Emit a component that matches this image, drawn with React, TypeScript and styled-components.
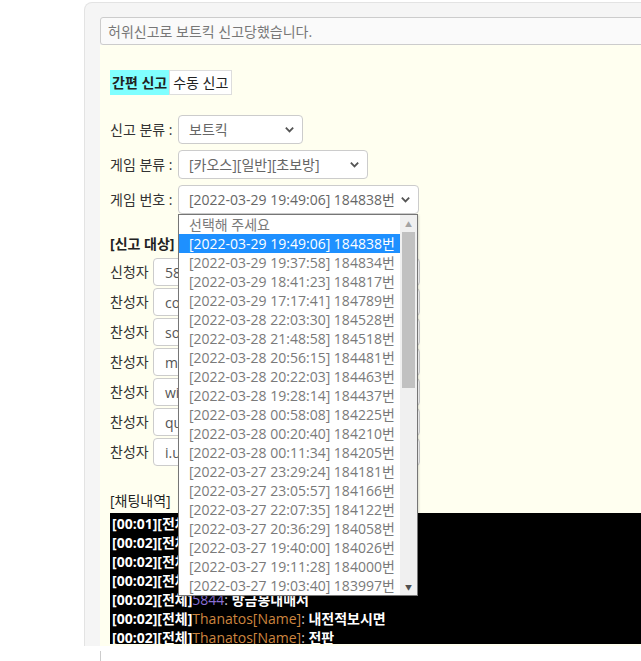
import React from "react";
import styled, { createGlobalStyle } from "styled-components";

const GlobalStyle = createGlobalStyle`
  html, body {
    margin: 0;
    padding: 0;
    background: #ffffff;
    overflow: hidden;
  }
  body {
    font-family: "Open Sans", "Noto Sans CJK KR", sans-serif;
    font-size: 14px;
    color: #333;
  }
`;

const Page = styled.div`
  width: 641px;
  height: 661px;
  box-sizing: border-box;
  padding: 2px 0 0 84px;
  overflow: hidden;
`;

const Well = styled.div`
  width: 660px;
  background: #f5f5f5;
  border: 1px solid #e3e3e3;
  border-bottom: none;
  border-radius: 8px 8px 0 0;
  padding: 14px 0 0 15px;
`;

const ReasonInput = styled.input`
  display: block;
  box-sizing: border-box;
  width: 640px;
  height: 28px;
  margin: 0;
  padding: 0 7px;
  border: 1px solid #cccccc;
  border-radius: 3px;
  background: #fafafa;
  font-family: "Open Sans", "Noto Sans CJK KR", sans-serif;
  font-size: 14px;
  outline: none;
  &::placeholder {
    color: #777;
  }
`;

const Panel = styled.div`
  background: #fffff0;
  padding: 25px 0 0 10px;
  height: 601px;
  box-sizing: border-box;
  overflow: hidden;
`;

const Tabs = styled.div`
  display: flex;
  height: 25px;
`;

const Tab = styled.div<{ $active?: boolean }>`
  display: flex;
  align-items: center;
  padding: 0 ${(p) => (p.$active ? "2px" : "3px")};
  background: ${(p) => (p.$active ? "#80ffff" : "#ffffff")};
  border: ${(p) => (p.$active ? "none" : "1px solid #dddddd")};
  box-sizing: border-box;
  font-weight: ${(p) => (p.$active ? 700 : 400)};
  color: #222;
  line-height: 20px;
`;

const Form = styled.div`
  display: flex;
  flex-direction: column;
  gap: 6px;
  margin-top: 20px;
`;

const FormRow = styled.div`
  display: flex;
  align-items: center;
  gap: 3px;
`;

const Label = styled.span`
  width: 65px;
  flex-shrink: 0;
  color: #333;
  line-height: 20px;
  white-space: nowrap;
`;

const SelectWrap = styled.div`
  position: relative;
`;

const FakeSelect = styled.div<{ $w: number }>`
  display: flex;
  align-items: center;
  justify-content: space-between;
  box-sizing: border-box;
  width: ${(p) => p.$w}px;
  height: 29px;
  padding: 0 7px 0 10px;
  background: #ffffff;
  border: 1px solid #cccccc;
  border-radius: 4px;
  color: #666;
  line-height: 20px;
  white-space: nowrap;
`;

const DropList = styled.div`
  position: absolute;
  top: 100%;
  left: 0;
  z-index: 5;
  display: flex;
  width: 240px;
  box-sizing: border-box;
  background: #ffffff;
  border: 1px solid #767676;
  box-shadow: 1px 1px 2px rgba(0, 0, 0, 0.15);
`;

const Options = styled.div`
  flex: 1;
  display: flex;
  flex-direction: column;
`;

const Option = styled.div<{ $selected?: boolean }>`
  height: 19px;
  line-height: 19px;
  padding-left: 10px;
  white-space: nowrap;
  overflow: hidden;
  background: ${(p) => (p.$selected ? "#1e90ff" : "transparent")};
  color: ${(p) => (p.$selected ? "#ffffff" : "#7a7a7a")};
`;

const ScrollTrack = styled.div`
  width: 17px;
  background: #f0f0f0;
  display: flex;
  flex-direction: column;
  align-items: center;
`;

const ScrollArrow = styled.div<{ $dark?: boolean }>`
  height: 17px;
  width: 17px;
  display: flex;
  align-items: center;
  justify-content: center;
  color: ${(p) => (p.$dark ? "#505050" : "#a3a3a3")};
  font-size: 7px;
`;

const ScrollThumb = styled.div`
  width: 13px;
  height: 156px;
  background: #c1c1c1;
`;

const ScrollRest = styled.div`
  flex: 1;
`;

const SectionTitle = styled.div`
  margin-top: 20px;
  font-weight: 700;
  line-height: 20px;
  color: #222;
`;

const Targets = styled.div`
  display: flex;
  flex-direction: column;
  gap: 2px;
  margin-top: 4px;
`;

const TargetRow = styled.div`
  display: flex;
  align-items: center;
  gap: 1px;
`;

const TargetLabel = styled.span`
  width: 42px;
  flex-shrink: 0;
  white-space: nowrap;
  line-height: 20px;
  color: #333;
`;

const TargetInput = styled.div`
  box-sizing: border-box;
  width: 267px;
  height: 28px;
  padding: 0 11px;
  display: flex;
  align-items: center;
  background: #ffffff;
  border: 1px solid #cccccc;
  border-radius: 4px;
  color: #555;
`;

const ChatTitle = styled.div`
  margin-top: 25px;
  line-height: 20px;
  color: #222;
`;

const ChatBox = styled.div`
  margin-top: 2px;
  height: 131px;
  background: #000000;
  padding: 1px 0 0 2px;
  box-sizing: border-box;
  overflow: hidden;
`;

const ChatLine = styled.div`
  height: 19px;
  line-height: 19px;
  white-space: nowrap;
  font-weight: 700;
  color: #ffffff;
`;

const Nick = styled.span<{ $color: string }>`
  color: ${(p) => p.$color};
  font-weight: 400;
`;

const Colon = styled.span`
  color: #cccccc;
  font-weight: 400;
`;

const NextBlock = styled.div`
  margin: 5px 0 0 16px;
  height: 11px;
  border-left: 1px solid #cccccc;
`;

const Chevron = () => (
  <svg width="11" height="11" viewBox="0 0 12 12">
    <path d="M2 4 L6 8 L10 4" fill="none" stroke="#555" strokeWidth="2" />
  </svg>
);

const games = [
  "[2022-03-29 19:49:06] 184838번",
  "[2022-03-29 19:37:58] 184834번",
  "[2022-03-29 18:41:23] 184817번",
  "[2022-03-29 17:17:41] 184789번",
  "[2022-03-28 22:03:30] 184528번",
  "[2022-03-28 21:48:58] 184518번",
  "[2022-03-28 20:56:15] 184481번",
  "[2022-03-28 20:22:03] 184463번",
  "[2022-03-28 19:28:14] 184437번",
  "[2022-03-28 00:58:08] 184225번",
  "[2022-03-28 00:20:40] 184210번",
  "[2022-03-28 00:11:34] 184205번",
  "[2022-03-27 23:29:24] 184181번",
  "[2022-03-27 23:05:57] 184166번",
  "[2022-03-27 22:07:35] 184122번",
  "[2022-03-27 20:36:29] 184058번",
  "[2022-03-27 19:40:00] 184026번",
  "[2022-03-27 19:11:28] 184000번",
  "[2022-03-27 19:03:40] 183997번",
];

const targets = [
  { label: "신청자", value: "5844" },
  { label: "찬성자", value: "coolstar" },
  { label: "찬성자", value: "sonic" },
  { label: "찬성자", value: "mellow" },
  { label: "찬성자", value: "winner" },
  { label: "찬성자", value: "queen" },
  { label: "찬성자", value: "i.u" },
];

const chats = [
  { time: "[00:01][전체]", nick: "Thanatos[Name]", color: "#cd853f", msg: "ㅎㅇ" },
  { time: "[00:02][전체]", nick: "5844", color: "#8a6fd6", msg: "보트킥 하자" },
  { time: "[00:02][전체]", nick: "5844", color: "#8a6fd6", msg: "초보방인데" },
  { time: "[00:02][전체]", nick: "Thanatos[Name]", color: "#cd853f", msg: "왜요" },
  { time: "[00:02][전체]", nick: "5844", color: "#8a6fd6", msg: "방금봉내매서" },
  { time: "[00:02][전체]", nick: "Thanatos[Name]", color: "#cd853f", msg: "내전적보시면" },
  { time: "[00:02][전체]", nick: "Thanatos[Name]", color: "#cd853f", msg: "전판" },
];

export default function App() {
  return (
    <>
      <GlobalStyle />
      <Page>
        <Well>
          <ReasonInput placeholder="허위신고로 보트킥 신고당했습니다." />
          <Panel>
            <Tabs>
              <Tab $active>간편 신고</Tab>
              <Tab>수동 신고</Tab>
            </Tabs>
            <Form>
              <FormRow>
                <Label>신고 분류 :</Label>
                <FakeSelect $w={125}>
                  보트킥
                  <Chevron />
                </FakeSelect>
              </FormRow>
              <FormRow>
                <Label>게임 분류 :</Label>
                <FakeSelect $w={190}>
                  [카오스][일반][초보방]
                  <Chevron />
                </FakeSelect>
              </FormRow>
              <FormRow>
                <Label>게임 번호 :</Label>
                <SelectWrap>
                  <FakeSelect $w={241}>
                    {games[0]}
                    <Chevron />
                  </FakeSelect>
                  <DropList>
                    <Options>
                      <Option>선택해 주세요</Option>
                      {games.map((g, i) => (
                        <Option key={g} $selected={i === 0}>
                          {g}
                        </Option>
                      ))}
                    </Options>
                    <ScrollTrack>
                      <ScrollArrow>▲</ScrollArrow>
                      <ScrollThumb />
                      <ScrollRest />
                      <ScrollArrow $dark>▼</ScrollArrow>
                    </ScrollTrack>
                  </DropList>
                </SelectWrap>
              </FormRow>
            </Form>
            <SectionTitle>[신고 대상]</SectionTitle>
            <Targets>
              {targets.map((t, i) => (
                <TargetRow key={i}>
                  <TargetLabel>{t.label}</TargetLabel>
                  <TargetInput>{t.value}</TargetInput>
                </TargetRow>
              ))}
            </Targets>
            <ChatTitle>[채팅내역]</ChatTitle>
            <ChatBox>
              {chats.map((c, i) => (
                <ChatLine key={i}>
                  {c.time}
                  <Nick $color={c.color}>{c.nick}</Nick>
                  <Colon>: </Colon>
                  {c.msg}
                </ChatLine>
              ))}
            </ChatBox>
          </Panel>
        </Well>
        <NextBlock />
      </Page>
    </>
  );
}
